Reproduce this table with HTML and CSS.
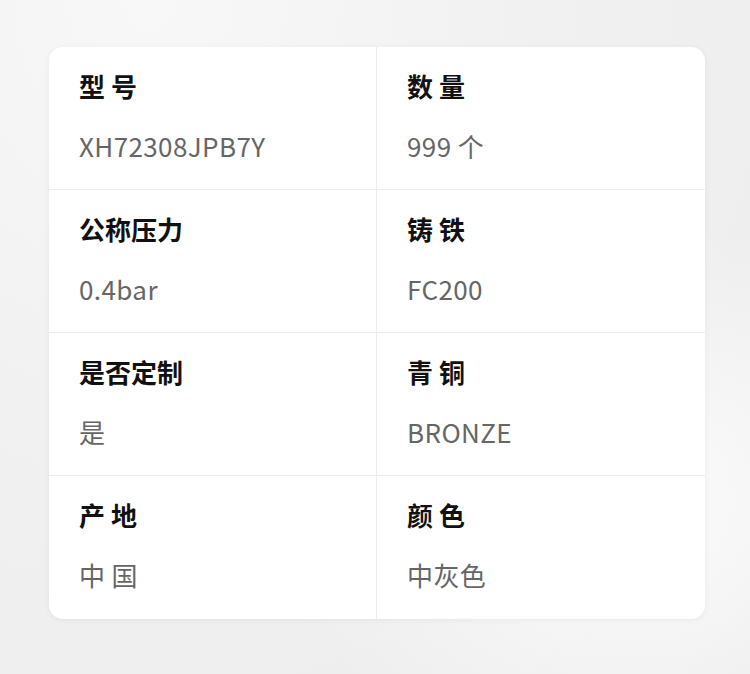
FILE: index.html
```html
<!DOCTYPE html>
<html lang="zh">
<head>
<meta charset="utf-8">
<link rel="stylesheet" href="styles.css">
</head>
<body>
<div class="page">
  <div class="card">
    <div class="cell"><div class="label">型 号</div><div class="value">XH72308JPB7Y</div></div>
    <div class="cell"><div class="label">数 量</div><div class="value">999 个</div></div>
    <div class="cell"><div class="label">公称压力</div><div class="value">0.4bar</div></div>
    <div class="cell"><div class="label">铸 铁</div><div class="value">FC200</div></div>
    <div class="cell"><div class="label">是否定制</div><div class="value">是</div></div>
    <div class="cell"><div class="label">青 铜</div><div class="value">BRONZE</div></div>
    <div class="cell"><div class="label">产 地</div><div class="value">中 国</div></div>
    <div class="cell"><div class="label">颜 色</div><div class="value">中灰色</div></div>
  </div>
</div>
</body>
</html>
```
FILE: styles.css
```css
html, body { margin: 0; padding: 0; }
body {
  width: 750px;
  height: 674px;
  overflow: hidden;
  font-family: "Noto Sans CJK SC", "Noto Sans", sans-serif;
  background:
    radial-gradient(ellipse at 85% 75%, rgba(255,255,255,0.8) 0%, rgba(255,255,255,0) 40%),
    radial-gradient(ellipse at 20% 0%, #f8f8f8 0%, #f1f1f1 45%, #ececec 100%);
}
.page {
  padding: 47px 45px 0 49px;
}
.card {
  width: 656px;
  background: #fff;
  border-radius: 14px;
  box-shadow: 0 1px 6px rgba(0,0,0,0.06);
  display: grid;
  grid-template-columns: 328px 328px;
  grid-auto-rows: 143px;
  overflow: hidden;
}
.cell {
  padding: 21px 30px 0 30px;
  border-bottom: 1px solid #ececec;
  box-sizing: border-box;
}
.cell:nth-child(odd) { border-right: 1px solid #ececec; }
.cell:nth-last-child(-n+2) { border-bottom: none; height: 145px; }
.label {
  font-size: 26px;
  line-height: 36px;
  font-weight: 700;
  color: #111;
}
.value {
  margin-top: 24px;
  font-size: 26px;
  line-height: 36px;
  letter-spacing: 0.4px;
  color: #666;
}
```
